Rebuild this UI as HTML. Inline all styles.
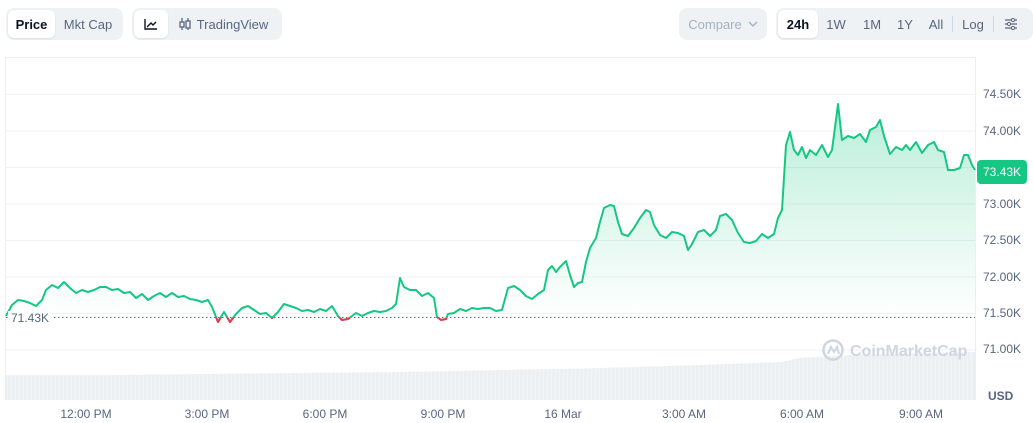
<!DOCTYPE html>
<html><head><meta charset="utf-8"><style>
*{margin:0;padding:0;box-sizing:border-box}
body{width:1033px;height:423px;background:#fff;font-family:"Liberation Sans",sans-serif;position:relative;overflow:hidden;color:#58667e}
.grp{position:absolute;top:8px;height:32px;background:#eff2f5;border-radius:8px;display:flex;align-items:center;padding:2px}
.b{height:28px;display:flex;align-items:center;justify-content:center;font-size:13px;color:#58667e;border-radius:6px}
.act{background:#fff;color:#0d1421;font-weight:bold;box-shadow:0 1px 2px rgba(0,0,0,.08)}
.yl{position:absolute;left:983px;font-size:12px;color:#58667e}
.xl{position:absolute;top:407px;font-size:12px;color:#58667e;transform:translateX(-50%);white-space:nowrap}
#area{stroke:inherit}
</style></head><body>
<div class="grp" style="left:6px;width:117px">
 <div class="b act" style="width:47px">Price</div><div class="b" style="width:66px">Mkt Cap</div>
</div>
<div class="grp" style="left:132px;width:150px">
 <div class="b act" style="width:34px"><svg width="14" height="12" viewBox="0 0 14 12"><path d="M1 1V11H13M3 9L7 5L9 7L12 4" stroke="#0d1421" stroke-width="1.4" fill="none"/></svg></div>
 <div class="b" style="width:110px;gap:5px"><svg width="14" height="14" viewBox="0 0 14 14"><path d="M4 1V13M10 1V13" stroke="#58667e" stroke-width="1.3"/><rect x="2" y="5" width="4" height="5" fill="#eff2f5" stroke="#58667e" stroke-width="1.3"/><rect x="8" y="4" width="4" height="7" fill="#eff2f5" stroke="#58667e" stroke-width="1.3"/></svg>TradingView</div>
</div>
<div class="grp" style="left:679px;width:88px;justify-content:center;color:#a6b0c3;font-size:13px;gap:6px">Compare <svg width="10" height="6" viewBox="0 0 10 6"><path d="M1 1L5 5L9 1" stroke="#a6b0c3" stroke-width="1.4" fill="none"/></svg></div>
<div class="grp" style="left:776px;width:257px">
 <div class="b act" style="width:40px">24h</div>
 <div class="b" style="width:36px">1W</div>
 <div class="b" style="width:36px">1M</div>
 <div class="b" style="width:30px">1Y</div>
 <div class="b" style="width:32px">All</div>
 <div style="width:1px;height:16px;background:#cfd6e4"></div>
 <div class="b" style="width:40px">Log</div>
 <div style="width:1px;height:16px;background:#cfd6e4"></div>
 <div class="b" style="width:34px"><svg width="14" height="12" viewBox="0 0 14 12"><path d="M1 2H13M1 6H13M1 10H13" stroke="#58667e" stroke-width="1.3"/><circle cx="9" cy="2" r="1.6" fill="#eff2f5" stroke="#58667e"/><circle cx="5" cy="6" r="1.6" fill="#eff2f5" stroke="#58667e"/><circle cx="9" cy="10" r="1.6" fill="#eff2f5" stroke="#58667e"/></svg></div>
</div>
<svg width="1033" height="423" style="position:absolute;left:0;top:0">
 <defs>
  <linearGradient id="g" x1="0" y1="0" x2="0" y2="1"><stop offset="0" stop-color="#16c784" stop-opacity=".3"/><stop offset="1" stop-color="#16c784" stop-opacity="0"/></linearGradient>
  <clipPath id="below"><rect x="0" y="317.5" width="1033" height="100"/></clipPath>
  <pattern id="vb" width="4" height="50" patternUnits="userSpaceOnUse"><rect width="4" height="50" fill="#edf0f3"/><rect x="3.4" width="0.6" height="50" fill="#f6f7f9"/></pattern>
 </defs>
 <path d="M5.5 400V57.5H975.5V400" stroke="#eceef1" fill="none"/>
 <g stroke="#f0f2f4"><path d="M6 94.5H975M6 131H975M6 167.5H975M6 204H975M6 240.5H975M6 277H975M6 313.5H975M6 350H975"/></g>
 <path d="M6 375L100 375L200 374L300 373L400 372L500 370L600 368L700 365L780 362L800 358L850 355L975 352L975 400L6 400Z" fill="url(#vb)"/>
 <g font-family="Liberation Sans" font-size="16" font-weight="bold" fill="#cfd6e0"><text x="850" y="356">CoinMarketCap</text></g>
 <circle cx="833" cy="350" r="9.5" fill="none" stroke="#cfd6e0" stroke-width="2.5"/>
 <path d="M828 354L831 347L834 352L837 347L839 354" stroke="#cfd6e0" stroke-width="2" fill="none"/>
 <path id="area" d="M6,316 L12,305 L18,300 L24,301 L30,303 L36,306 L42,300 L46,290 L52,285 L58,288 L64,282 L70,288 L76,293 L82,290 L88,292 L94,290 L100,287 L106,287 L112,290 L118,289 L124,293 L130,292 L136,298 L142,294 L148,300 L154,296 L160,293 L166,297 L172,293 L178,297 L184,296 L190,299 L196,300 L202,302 L208,300 L212,307 L218,322 L224,312 L230,322 L236,314 L242,308 L248,306 L254,310 L260,314 L266,313 L272,318 L278,312 L284,304 L290,306 L296,308 L302,311 L308,310 L314,312 L320,309 L326,311 L332,306 L338,316 L342,320 L348,319 L352,316 L356,313 L362,316 L368,313 L374,311 L380,312 L386,311 L392,308 L396,304 L400,278 L404,287 L410,290 L416,290 L422,296 L428,293 L434,298 L437,317 L441,320 L446,319 L448,314 L454,313 L460,309 L466,311 L472,308 L478,309 L484,308 L490,308 L496,311 L502,310 L508,288 L514,286 L520,290 L526,296 L532,299 L538,294 L544,290 L548,270 L552,266 L556,272 L560,267 L566,261 L570,275 L574,287 L578,283 L582,282 L586,262 L590,248 L596,238 L600,222 L604,208 L610,205 L614,206 L618,222 L622,234 L628,236 L634,228 L640,218 L646,210 L650,212 L654,225 L660,235 L666,238 L672,232 L678,233 L684,236 L688,250 L692,244 L698,232 L704,230 L710,236 L716,230 L720,216 L726,214 L732,220 L738,233 L744,242 L750,243 L756,241 L762,234 L768,238 L774,234 L778,218 L782,210 L786,145 L790,132 L794,150 L798,155 L802,147 L806,158 L810,150 L816,155 L822,145 L828,157 L832,150 L836,120 L838,104 L842,140 L848,136 L854,138 L860,134 L866,142 L870,130 L876,127 L880,120 L884,136 L890,154 L896,147 L902,150 L906,145 L910,150 L916,142 L922,153 L928,145 L934,142 L938,150 L944,152 L948,170 L954,170 L960,168 L964,155 L968,155 L972,165 L975,170" fill="none" stroke-width="2" stroke-linejoin="round"/>
 <path d="M6,316 L12,305 L18,300 L24,301 L30,303 L36,306 L42,300 L46,290 L52,285 L58,288 L64,282 L70,288 L76,293 L82,290 L88,292 L94,290 L100,287 L106,287 L112,290 L118,289 L124,293 L130,292 L136,298 L142,294 L148,300 L154,296 L160,293 L166,297 L172,293 L178,297 L184,296 L190,299 L196,300 L202,302 L208,300 L212,307 L218,317 L224,312 L230,317 L236,314 L242,308 L248,306 L254,310 L260,314 L266,313 L272,317 L278,312 L284,304 L290,306 L296,308 L302,311 L308,310 L314,312 L320,309 L326,311 L332,306 L338,315 L344,317 L350,316 L356,313 L362,316 L368,313 L374,311 L380,312 L386,311 L392,308 L396,304 L400,278 L404,287 L410,290 L416,290 L422,296 L428,293 L434,298 L437,316 L442,317 L448,312 L454,313 L460,309 L466,311 L472,308 L478,309 L484,308 L490,308 L496,311 L502,310 L508,288 L514,286 L520,290 L526,296 L532,299 L538,294 L544,290 L548,270 L552,266 L556,272 L560,267 L566,261 L570,275 L574,287 L578,283 L582,282 L586,262 L590,248 L596,238 L600,222 L604,208 L610,205 L614,206 L618,222 L622,234 L628,236 L634,228 L640,218 L646,210 L650,212 L654,225 L660,235 L666,238 L672,232 L678,233 L684,236 L688,250 L692,244 L698,232 L704,230 L710,236 L716,230 L720,216 L726,214 L732,220 L738,233 L744,242 L750,243 L756,241 L762,234 L768,238 L774,234 L778,218 L782,210 L786,145 L790,132 L794,150 L798,155 L802,147 L806,158 L810,150 L816,155 L822,145 L828,157 L832,150 L836,120 L838,104 L842,140 L848,136 L854,138 L860,134 L866,142 L870,130 L876,127 L880,120 L884,136 L890,154 L896,147 L902,150 L906,145 L910,150 L916,142 L922,153 L928,145 L934,142 L938,150 L944,152 L948,170 L954,170 L960,168 L964,155 L968,155 L972,165 L975,170 L975,317 L6,317Z" fill="url(#g)"/>
 <path d="M6 317.5H975" stroke="#58667e" stroke-width="1" stroke-dasharray="1.5 2.5"/>
 <use href="#area" stroke="#16c784"/>
 <g clip-path="url(#below)"><use href="#area" stroke="#ea3943"/></g>
</svg>
<div style="position:absolute;left:8px;top:311px;background:#fff;font-size:12px;color:#58667e;padding:0 3px">71.43K</div>
<div class="yl" style="top:87px">74.50K</div>
<div class="yl" style="top:124px">74.00K</div>
<div class="yl" style="top:197px">73.00K</div>
<div class="yl" style="top:233px">72.50K</div>
<div class="yl" style="top:270px">72.00K</div>
<div class="yl" style="top:306px">71.50K</div>
<div class="yl" style="top:342px">71.00K</div>
<div style="position:absolute;left:977px;top:160px;width:50px;height:24px;background:#16c784;border-radius:4px;color:#fff;font-size:12px;display:flex;align-items:center;justify-content:center">73.43K</div>
<div style="position:absolute;left:988px;top:389px;font-size:12px;font-weight:bold;color:#58667e">USD</div>
<div class="xl" style="left:86px">12:00 PM</div>
<div class="xl" style="left:207px">3:00 PM</div>
<div class="xl" style="left:325px">6:00 PM</div>
<div class="xl" style="left:443px">9:00 PM</div>
<div class="xl" style="left:563px">16 Mar</div>
<div class="xl" style="left:684px">3:00 AM</div>
<div class="xl" style="left:802px">6:00 AM</div>
<div class="xl" style="left:921px">9:00 AM</div>
</body></html>
